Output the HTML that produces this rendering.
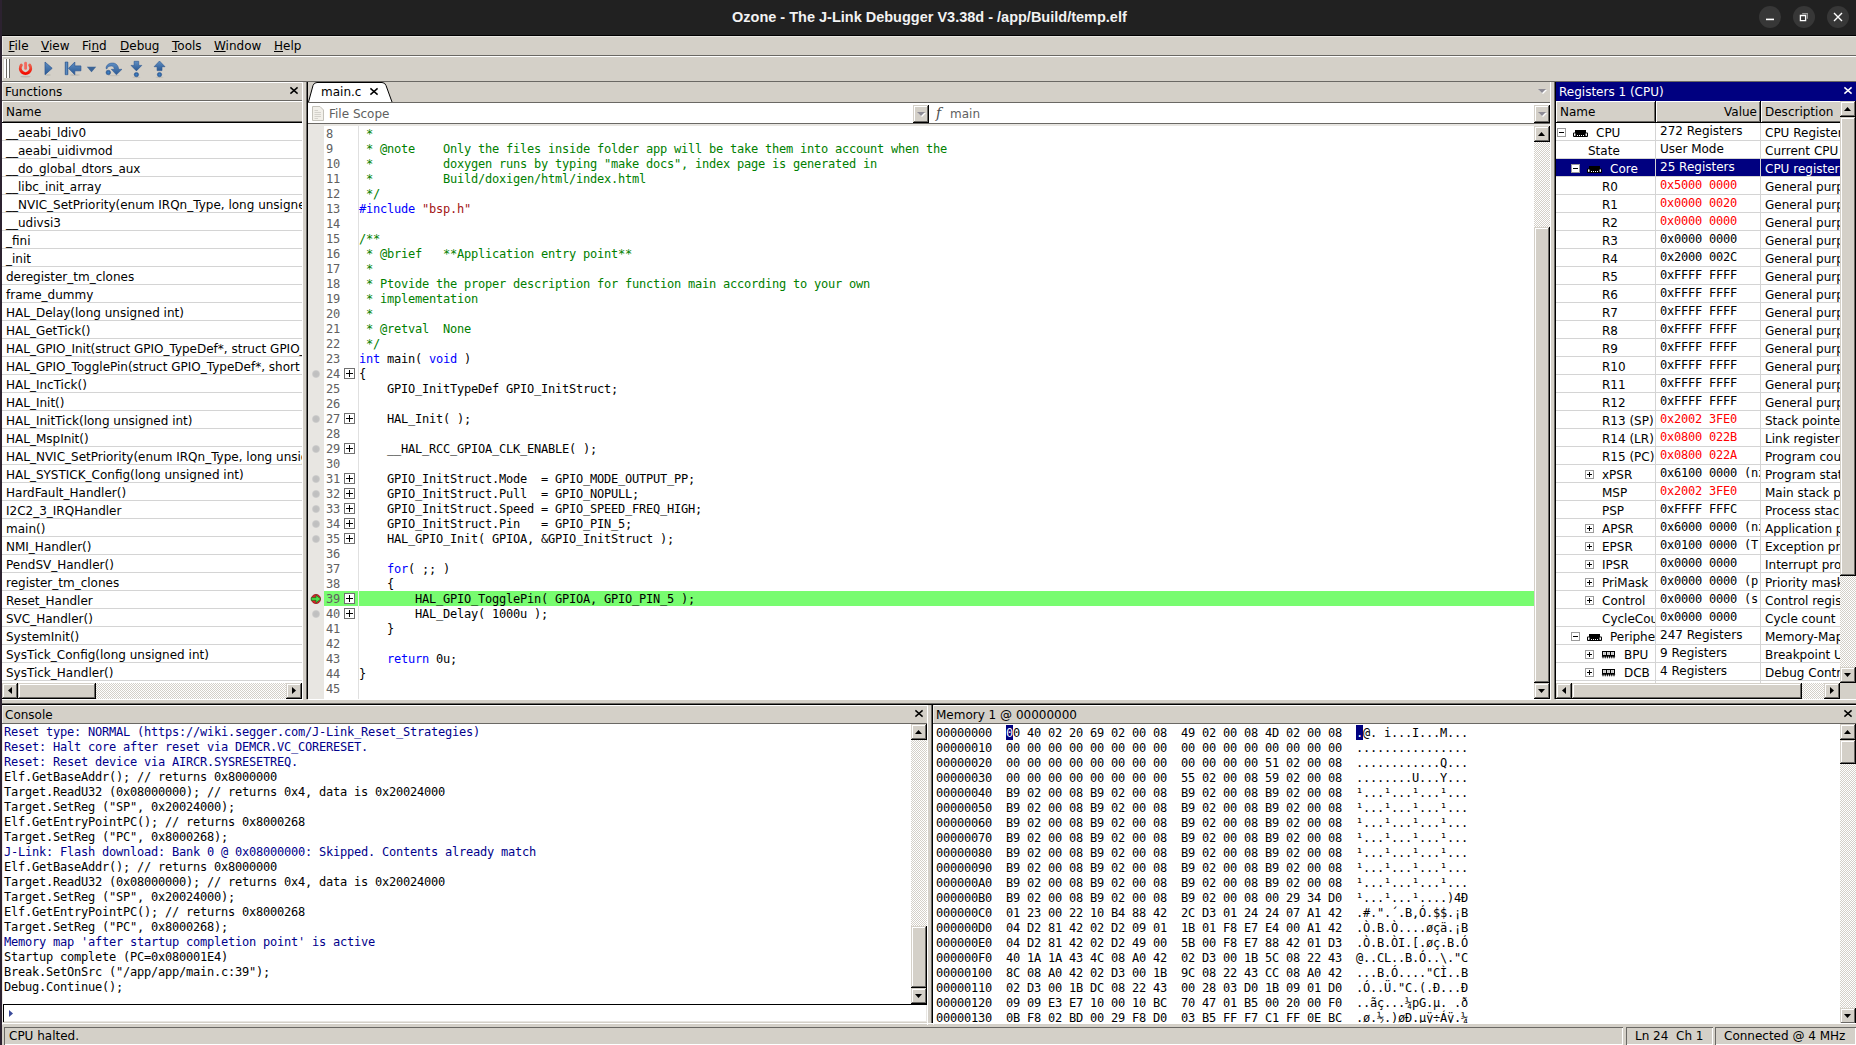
<!DOCTYPE html><html><head><meta charset="utf-8"><title>Ozone</title><style>
*{box-sizing:border-box;margin:0;padding:0}
html,body{width:1856px;height:1045px;overflow:hidden;background:#d4d0c8}
body{position:relative;font-family:"DejaVu Sans","Liberation Sans",sans-serif;font-size:12px;color:#000;}
.a{position:absolute}
.t{position:absolute;white-space:pre;line-height:15px;height:15px;margin-top:1px}
.m{font-family:"DejaVu Sans Mono","Liberation Mono",monospace;font-size:12px;letter-spacing:-0.224px}
.w{background:#fff}
.hl{background:#fff}
.sh{background:#6a6864}
.bk{background:#000}
.btn{position:absolute;background:#d4d0c8;box-shadow:inset -1px -1px 0 #000,inset 1px 1px 0 #d4d0c8,inset -2px -2px 0 #6a6864,inset 2px 2px 0 #fff}
.trk{position:absolute;background-color:#fff;background-image:conic-gradient(#d4d0c8 25%,#fff 0 50%,#d4d0c8 0 75%,#fff 0);background-size:2px 2px}
.hdr{position:absolute;background:#d4d0c8;box-shadow:inset -1px -1px 0 #000,inset 1px 1px 0 #fff,inset -2px -2px 0 #6a6864}
.row{position:absolute;left:0;right:0;height:18px;border-bottom:1px solid #d4d4d4}
.g{color:#008000}.b{color:#0000ff}.r{color:#a31515}.n{color:#606060}
.cb{color:#00008b}
u{text-decoration:underline;text-underline-offset:1px}
svg{position:absolute;overflow:visible}
</style></head><body>
<div class="a " style="left:0px;top:0px;width:1856px;height:35px;background:#212121"></div>
<div class="a bk" style="left:0px;top:35px;width:1856px;height:1px;"></div>
<div class="t " style="left:732px;top:8px;font-family:Liberation Sans,sans-serif;font-weight:bold;font-size:14.5px;color:#f2f2f2;line-height:17px;height:17px">Ozone - The J-Link Debugger V3.38d - /app/Build/temp.elf</div>
<div class="a" style="left:1759px;top:6px;width:22px;height:22px;border-radius:11px;background:#373737"></div>
<div class="a" style="left:1793px;top:6px;width:22px;height:22px;border-radius:11px;background:#373737"></div>
<div class="a" style="left:1827px;top:6px;width:22px;height:22px;border-radius:11px;background:#373737"></div>
<svg style="left:1765px;top:12px" width="10" height="10"><path d="M1 7.4H9" stroke="#fff" stroke-width="1.6"/></svg>
<svg style="left:1799px;top:12px" width="10" height="10"><path d="M3.2 1.6H8.4V6.8" stroke="#9a9a9a" stroke-width="1.1" fill="none"/><path d="M1.4 3.5H6.6V8.6H1.4Z" stroke="#fff" stroke-width="1.3" fill="none"/></svg>
<svg style="left:1834px;top:13px" width="8" height="8"><path d="M0 0L8 8M8 0L0 8" stroke="#fff" stroke-width="1.4"/></svg>
<div class="a " style="left:0px;top:0px;width:2px;height:1045px;background:#2c2230"></div>
<div class="a " style="left:2px;top:36px;width:1854px;height:1px;background:#eae8e3"></div>
<div class="a " style="left:2px;top:36px;width:1px;height:19px;background:#eae8e3"></div>
<div class="a " style="left:2px;top:57px;width:1px;height:24px;background:#eae8e3"></div>
<div class="a sh" style="left:2px;top:55px;width:1854px;height:1px;"></div>
<div class="a w" style="left:2px;top:56px;width:1854px;height:1px;"></div>
<div class="t " style="left:8.5px;top:38px;"><u>F</u>ile</div>
<div class="t " style="left:41px;top:38px;"><u>V</u>iew</div>
<div class="t " style="left:82px;top:38px;">Fi<u>n</u>d</div>
<div class="t " style="left:120px;top:38px;"><u>D</u>ebug</div>
<div class="t " style="left:172px;top:38px;"><u>T</u>ools</div>
<div class="t " style="left:214px;top:38px;"><u>W</u>indow</div>
<div class="t " style="left:274px;top:38px;"><u>H</u>elp</div>
<div class="a sh" style="left:2px;top:81px;width:1854px;height:1px;"></div>
<div class="a w" style="left:4px;top:59px;width:1px;height:19px;"></div>
<div class="a w" style="left:5px;top:59px;width:1px;height:19px;"></div>
<div class="a sh" style="left:6px;top:59px;width:1px;height:19px;"></div>
<div class="a w" style="left:7px;top:59px;width:1px;height:19px;"></div>
<div class="a w" style="left:8px;top:59px;width:1px;height:19px;"></div>
<div class="a sh" style="left:9px;top:59px;width:1px;height:19px;"></div>
<svg style="left:0;top:0" width="180" height="82">
<defs>
<linearGradient id="bl" x1="0" y1="0" x2="0" y2="1"><stop offset="0" stop-color="#5f8fc4"/><stop offset="1" stop-color="#2a5892"/></linearGradient>
<linearGradient id="bh" x1="0" y1="0" x2="1" y2="0"><stop offset="0" stop-color="#2f5f9a"/><stop offset="0.5" stop-color="#5a8cc2"/><stop offset="1" stop-color="#2f5f9a"/></linearGradient>
<linearGradient id="rd" x1="0" y1="0" x2="0" y2="1"><stop offset="0" stop-color="#e8604c"/><stop offset="1" stop-color="#f40c00"/></linearGradient>
<radialGradient id="dt"><stop offset="0" stop-color="#3f86cc"/><stop offset="1" stop-color="#2a5892"/></radialGradient>
</defs>
<ellipse cx="25.5" cy="76.6" rx="5" ry="0.9" fill="#bcb8b0"/>
<ellipse cx="48" cy="75" rx="3" ry="0.7" fill="#bcb8b0"/>
<ellipse cx="75" cy="75" rx="5" ry="0.7" fill="#bcb8b0"/>
<ellipse cx="114" cy="75.6" rx="6" ry="0.7" fill="#c4c0b8"/>
<ellipse cx="136.4" cy="77.2" rx="4" ry="0.7" fill="#c4c0b8"/>
<ellipse cx="159.5" cy="77.2" rx="4" ry="0.7" fill="#c4c0b8"/>
<path d="M21.3 65.2 A5.2 5.2 0 1 0 29.7 65.2" fill="none" stroke="url(#rd)" stroke-width="3" stroke-linecap="round"/>
<path d="M25.6 63.2V68.4" stroke="#f26a60" stroke-width="2.8" stroke-linecap="round"/>
<path d="M45 62L52.2 68.3L45 74.7Z" fill="url(#bl)" stroke="#2a5590" stroke-width="0.7" stroke-linejoin="round"/>
<path d="M65.2 62H67.9V74.7H65.2Z" fill="url(#bh)" stroke="#2a5590" stroke-width="0.6"/>
<path d="M68.5 68.3L74.8 62V65.9H80.9V70.8H74.8V74.7Z" fill="url(#bl)" stroke="#2a5590" stroke-width="0.7" stroke-linejoin="round"/>
<path d="M86.8 66.8H96.2L91.5 72.2Z" fill="#3c6496"/>
<circle cx="108.3" cy="72.5" r="2.3" fill="url(#dt)" stroke="#2a5590" stroke-width="0.5"/>
<path d="M106 68.5C106 64.8 109.3 63 112.5 63C116 63 118.5 65.6 118.6 69.3L122 69.3L116.4 74.8L111.3 69.3L114.4 69.3C114.2 67.2 113 66 111.3 66C109 66 107.4 67.2 106.8 69Z" fill="url(#bl)" stroke="#2a5590" stroke-width="0.5" stroke-linejoin="round"/>
<path d="M134.1 61.3H138.7V65.4H141.8L136.4 70.9L131 65.4H134.1Z" fill="url(#bl)" stroke="#2a5590" stroke-width="0.6" stroke-linejoin="round"/>
<circle cx="136.4" cy="74.6" r="2.2" fill="url(#dt)" stroke="#2a5590" stroke-width="0.5"/>
<path d="M159.5 61L165 66.7H162V70.6H157.1V66.7H154.1Z" fill="url(#bl)" stroke="#2a5590" stroke-width="0.6" stroke-linejoin="round"/>
<circle cx="159.5" cy="74.6" r="2.2" fill="url(#dt)" stroke="#2a5590" stroke-width="0.5"/>
</svg>
<div class="a w" style="left:2px;top:82px;width:301px;height:1px;"></div>
<div class="a w" style="left:302px;top:82px;width:1px;height:617px;"></div>
<div class="a " style="left:2px;top:82px;width:1px;height:617px;background:#eceae6"></div>
<div class="a sh" style="left:2px;top:100px;width:300px;height:1px;"></div>
<div class="t " style="left:5px;top:84px;">Functions</div>
<svg style="left:290px;top:87px" width="8" height="7"><path d="M0.4 0.4L7.6 6.6M7.6 0.4L0.4 6.6" stroke="#000" stroke-width="1.45" fill="none"/></svg>
<div class="a " style="left:2px;top:101px;width:300px;height:22px;background:#d4d0c8;box-shadow:inset 0 -1px 0 #000,inset 1px 1px 0 #fff,inset 0 -2px 0 #6a6864"></div>
<div class="t " style="left:6px;top:104px;">Name</div>
<div class="a w" style="left:2px;top:123px;width:300px;height:576px;"></div>
<div class="a" style="left:2px;top:123px;width:300px;height:560px;overflow:hidden">
<div class="row" style="top:0px"><div class="t" style="left:4px;top:2px">__aeabi_ldiv0</div></div>
<div class="row" style="top:18px"><div class="t" style="left:4px;top:2px">__aeabi_uidivmod</div></div>
<div class="row" style="top:36px"><div class="t" style="left:4px;top:2px">__do_global_dtors_aux</div></div>
<div class="row" style="top:54px"><div class="t" style="left:4px;top:2px">__libc_init_array</div></div>
<div class="row" style="top:72px"><div class="t" style="left:4px;top:2px">__NVIC_SetPriority(enum IRQn_Type, long unsigned int)</div></div>
<div class="row" style="top:90px"><div class="t" style="left:4px;top:2px">__udivsi3</div></div>
<div class="row" style="top:108px"><div class="t" style="left:4px;top:2px">_fini</div></div>
<div class="row" style="top:126px"><div class="t" style="left:4px;top:2px">_init</div></div>
<div class="row" style="top:144px"><div class="t" style="left:4px;top:2px">deregister_tm_clones</div></div>
<div class="row" style="top:162px"><div class="t" style="left:4px;top:2px">frame_dummy</div></div>
<div class="row" style="top:180px"><div class="t" style="left:4px;top:2px">HAL_Delay(long unsigned int)</div></div>
<div class="row" style="top:198px"><div class="t" style="left:4px;top:2px">HAL_GetTick()</div></div>
<div class="row" style="top:216px"><div class="t" style="left:4px;top:2px">HAL_GPIO_Init(struct GPIO_TypeDef*, struct GPIO_InitTypeDef*)</div></div>
<div class="row" style="top:234px"><div class="t" style="left:4px;top:2px">HAL_GPIO_TogglePin(struct GPIO_TypeDef*, short unsigned int)</div></div>
<div class="row" style="top:252px"><div class="t" style="left:4px;top:2px">HAL_IncTick()</div></div>
<div class="row" style="top:270px"><div class="t" style="left:4px;top:2px">HAL_Init()</div></div>
<div class="row" style="top:288px"><div class="t" style="left:4px;top:2px">HAL_InitTick(long unsigned int)</div></div>
<div class="row" style="top:306px"><div class="t" style="left:4px;top:2px">HAL_MspInit()</div></div>
<div class="row" style="top:324px"><div class="t" style="left:4px;top:2px">HAL_NVIC_SetPriority(enum IRQn_Type, long unsigned int, long unsigned int)</div></div>
<div class="row" style="top:342px"><div class="t" style="left:4px;top:2px">HAL_SYSTICK_Config(long unsigned int)</div></div>
<div class="row" style="top:360px"><div class="t" style="left:4px;top:2px">HardFault_Handler()</div></div>
<div class="row" style="top:378px"><div class="t" style="left:4px;top:2px">I2C2_3_IRQHandler</div></div>
<div class="row" style="top:396px"><div class="t" style="left:4px;top:2px">main()</div></div>
<div class="row" style="top:414px"><div class="t" style="left:4px;top:2px">NMI_Handler()</div></div>
<div class="row" style="top:432px"><div class="t" style="left:4px;top:2px">PendSV_Handler()</div></div>
<div class="row" style="top:450px"><div class="t" style="left:4px;top:2px">register_tm_clones</div></div>
<div class="row" style="top:468px"><div class="t" style="left:4px;top:2px">Reset_Handler</div></div>
<div class="row" style="top:486px"><div class="t" style="left:4px;top:2px">SVC_Handler()</div></div>
<div class="row" style="top:504px"><div class="t" style="left:4px;top:2px">SystemInit()</div></div>
<div class="row" style="top:522px"><div class="t" style="left:4px;top:2px">SysTick_Config(long unsigned int)</div></div>
<div class="row" style="top:540px"><div class="t" style="left:4px;top:2px">SysTick_Handler()</div></div>
</div>
<div class="trk" style="left:2px;top:683px;width:300px;height:16px"></div>
<div class="btn" style="left:2px;top:683px;width:16px;height:16px"></div>
<svg style="left:8px;top:687px" width="8" height="8"><polygon points="4,0 4,7 0,3.5" fill="#000"/></svg>
<div class="btn" style="left:286px;top:683px;width:16px;height:16px"></div>
<svg style="left:292px;top:687px" width="8" height="8"><polygon points="0,0 0,7 4,3.5" fill="#000"/></svg>
<div class="btn" style="left:18px;top:683px;width:78px;height:16px"></div>
<div class="a sh" style="left:306px;top:82px;width:1px;height:617px;"></div>
<div class="a bk" style="left:307px;top:82px;width:1px;height:617px;"></div>
<div class="a " style="left:308px;top:82px;width:1242px;height:21px;background:#d4d0c8"></div>
<div class="a sh" style="left:308px;top:102px;width:1242px;height:1px;"></div>
<div class="a w" style="left:308px;top:103px;width:1242px;height:2px;"></div>
<svg style="left:308px;top:82px" width="90" height="22"><path d="M0.5 20 L5 3.5 Q6 0.5 9 0.5 L74 0.5 Q77 0.5 78 3.5 L84 20Z" fill="#fff"/><path d="M0.5 20 L5 3.5 Q6 0.5 9 0.5 L74 0.5 Q77 0.5 78 3.5 L84 20" fill="none" stroke="#000" stroke-width="1"/></svg>
<div class="t " style="left:321px;top:84px;">main.c</div>
<svg style="left:370px;top:88px" width="8" height="7"><path d="M0.4 0.4L7.6 6.6M7.6 0.4L0.4 6.6" stroke="#000" stroke-width="1.45" fill="none"/></svg>
<svg style="left:1538px;top:89px" width="10" height="6"><polygon points="1,1 9,1 5,5" fill="#fff"/><polygon points="0,0 8,0 4,4" fill="#8d8b95"/></svg>
<div class="a w" style="left:308px;top:105px;width:1242px;height:18px;"></div>
<div class="a sh" style="left:308px;top:123px;width:1242px;height:1px;"></div>
<div class="a " style="left:308px;top:124px;width:1242px;height:2px;background:#e8e6e2"></div>
<div class="t " style="left:329px;top:106px;color:#606060">File Scope</div>
<div class="a btn" style="left:913px;top:105px;width:16px;height:18px;"></div>
<svg style="left:917px;top:112px" width="10" height="6"><polygon points="1,1 9,1 5,5" fill="#fff"/><polygon points="0,0 8,0 4,4" fill="#8d8b95"/></svg>
<div class="t " style="left:936px;top:105px;color:#505050;font-style:italic;font-family:DejaVu Serif,serif;font-size:14px">f</div>
<div class="t " style="left:950px;top:106px;color:#606060">main</div>
<div class="a btn" style="left:1534px;top:105px;width:16px;height:18px;"></div>
<svg style="left:1538px;top:112px" width="10" height="6"><polygon points="1,1 9,1 5,5" fill="#fff"/><polygon points="0,0 8,0 4,4" fill="#8d8b95"/></svg>
<svg style="left:312px;top:106px" width="12" height="15"><path d="M0.5 0.5H8L11.5 4V14.5H0.5Z" fill="#f2f0ea" stroke="#c4c2ba"/><path d="M2.5 4.5H6M2.5 6.5H9M2.5 8.5H9M2.5 10.5H9M2.5 12.5H6" stroke="#d4d2cc"/></svg>
<div class="a w" style="left:308px;top:126px;width:1226px;height:573px;"></div>
<div class="a " style="left:308px;top:126px;width:16px;height:573px;background:#e8e6e2"></div>
<div class="a " style="left:358px;top:126px;width:1px;height:573px;background:#e0e0e0"></div>
<div class="a" style="left:308px;top:126px;width:1226px;height:573px;overflow:hidden">
<div class="t m n" style="left:18px;top:0px">8</div>
<div class="t m" style="left:51px;top:0px"><span class="g"> *</span></div>
<div class="t m n" style="left:18px;top:15px">9</div>
<div class="t m" style="left:51px;top:15px"><span class="g"> * @note    Only the files inside folder app will be take them into account when the</span></div>
<div class="t m n" style="left:18px;top:30px">10</div>
<div class="t m" style="left:51px;top:30px"><span class="g"> *          doxygen runs by typing &quot;make docs&quot;, index page is generated in</span></div>
<div class="t m n" style="left:18px;top:45px">11</div>
<div class="t m" style="left:51px;top:45px"><span class="g"> *          Build/doxigen/html/index.html</span></div>
<div class="t m n" style="left:18px;top:60px">12</div>
<div class="t m" style="left:51px;top:60px"><span class="g"> */</span></div>
<div class="t m n" style="left:18px;top:75px">13</div>
<div class="t m" style="left:51px;top:75px"><span class="b">#include</span> <span class="r">&quot;bsp.h&quot;</span></div>
<div class="t m n" style="left:18px;top:90px">14</div>
<div class="t m n" style="left:18px;top:105px">15</div>
<div class="t m" style="left:51px;top:105px"><span class="g">/**</span></div>
<div class="t m n" style="left:18px;top:120px">16</div>
<div class="t m" style="left:51px;top:120px"><span class="g"> * @brief   **Application entry point**</span></div>
<div class="t m n" style="left:18px;top:135px">17</div>
<div class="t m" style="left:51px;top:135px"><span class="g"> *</span></div>
<div class="t m n" style="left:18px;top:150px">18</div>
<div class="t m" style="left:51px;top:150px"><span class="g"> * Ptovide the proper description for function main according to your own</span></div>
<div class="t m n" style="left:18px;top:165px">19</div>
<div class="t m" style="left:51px;top:165px"><span class="g"> * implementation</span></div>
<div class="t m n" style="left:18px;top:180px">20</div>
<div class="t m" style="left:51px;top:180px"><span class="g"> *</span></div>
<div class="t m n" style="left:18px;top:195px">21</div>
<div class="t m" style="left:51px;top:195px"><span class="g"> * @retval  None</span></div>
<div class="t m n" style="left:18px;top:210px">22</div>
<div class="t m" style="left:51px;top:210px"><span class="g"> */</span></div>
<div class="t m n" style="left:18px;top:225px">23</div>
<div class="t m" style="left:51px;top:225px"><span class="b">int</span> main( <span class="b">void</span> )</div>
<div class="t m n" style="left:18px;top:240px">24</div>
<div class="a" style="left:36px;top:242px;width:11px;height:11px;border:1px solid #707070;background:#fff"></div>
<div class="a" style="left:38px;top:247px;width:7px;height:1px;background:#000"></div>
<div class="a" style="left:41px;top:244px;width:1px;height:7px;background:#000"></div>
<div class="a" style="left:4px;top:244px;width:8px;height:8px;border-radius:4px;background:radial-gradient(circle at 50% 50%,#bebebe 0,#c2c2c2 50%,rgba(200,200,200,0) 88%)"></div>
<div class="t m" style="left:51px;top:240px">{</div>
<div class="t m n" style="left:18px;top:255px">25</div>
<div class="t m" style="left:51px;top:255px">    GPIO_InitTypeDef GPIO_InitStruct;</div>
<div class="t m n" style="left:18px;top:270px">26</div>
<div class="t m n" style="left:18px;top:285px">27</div>
<div class="a" style="left:36px;top:287px;width:11px;height:11px;border:1px solid #707070;background:#fff"></div>
<div class="a" style="left:38px;top:292px;width:7px;height:1px;background:#000"></div>
<div class="a" style="left:41px;top:289px;width:1px;height:7px;background:#000"></div>
<div class="a" style="left:4px;top:289px;width:8px;height:8px;border-radius:4px;background:radial-gradient(circle at 50% 50%,#bebebe 0,#c2c2c2 50%,rgba(200,200,200,0) 88%)"></div>
<div class="t m" style="left:51px;top:285px">    HAL_Init( );</div>
<div class="t m n" style="left:18px;top:300px">28</div>
<div class="t m n" style="left:18px;top:315px">29</div>
<div class="a" style="left:36px;top:317px;width:11px;height:11px;border:1px solid #707070;background:#fff"></div>
<div class="a" style="left:38px;top:322px;width:7px;height:1px;background:#000"></div>
<div class="a" style="left:41px;top:319px;width:1px;height:7px;background:#000"></div>
<div class="a" style="left:4px;top:319px;width:8px;height:8px;border-radius:4px;background:radial-gradient(circle at 50% 50%,#bebebe 0,#c2c2c2 50%,rgba(200,200,200,0) 88%)"></div>
<div class="t m" style="left:51px;top:315px">    __HAL_RCC_GPIOA_CLK_ENABLE( );</div>
<div class="t m n" style="left:18px;top:330px">30</div>
<div class="t m n" style="left:18px;top:345px">31</div>
<div class="a" style="left:36px;top:347px;width:11px;height:11px;border:1px solid #707070;background:#fff"></div>
<div class="a" style="left:38px;top:352px;width:7px;height:1px;background:#000"></div>
<div class="a" style="left:41px;top:349px;width:1px;height:7px;background:#000"></div>
<div class="a" style="left:4px;top:349px;width:8px;height:8px;border-radius:4px;background:radial-gradient(circle at 50% 50%,#bebebe 0,#c2c2c2 50%,rgba(200,200,200,0) 88%)"></div>
<div class="t m" style="left:51px;top:345px">    GPIO_InitStruct.Mode  = GPIO_MODE_OUTPUT_PP;</div>
<div class="t m n" style="left:18px;top:360px">32</div>
<div class="a" style="left:36px;top:362px;width:11px;height:11px;border:1px solid #707070;background:#fff"></div>
<div class="a" style="left:38px;top:367px;width:7px;height:1px;background:#000"></div>
<div class="a" style="left:41px;top:364px;width:1px;height:7px;background:#000"></div>
<div class="a" style="left:4px;top:364px;width:8px;height:8px;border-radius:4px;background:radial-gradient(circle at 50% 50%,#bebebe 0,#c2c2c2 50%,rgba(200,200,200,0) 88%)"></div>
<div class="t m" style="left:51px;top:360px">    GPIO_InitStruct.Pull  = GPIO_NOPULL;</div>
<div class="t m n" style="left:18px;top:375px">33</div>
<div class="a" style="left:36px;top:377px;width:11px;height:11px;border:1px solid #707070;background:#fff"></div>
<div class="a" style="left:38px;top:382px;width:7px;height:1px;background:#000"></div>
<div class="a" style="left:41px;top:379px;width:1px;height:7px;background:#000"></div>
<div class="a" style="left:4px;top:379px;width:8px;height:8px;border-radius:4px;background:radial-gradient(circle at 50% 50%,#bebebe 0,#c2c2c2 50%,rgba(200,200,200,0) 88%)"></div>
<div class="t m" style="left:51px;top:375px">    GPIO_InitStruct.Speed = GPIO_SPEED_FREQ_HIGH;</div>
<div class="t m n" style="left:18px;top:390px">34</div>
<div class="a" style="left:36px;top:392px;width:11px;height:11px;border:1px solid #707070;background:#fff"></div>
<div class="a" style="left:38px;top:397px;width:7px;height:1px;background:#000"></div>
<div class="a" style="left:41px;top:394px;width:1px;height:7px;background:#000"></div>
<div class="a" style="left:4px;top:394px;width:8px;height:8px;border-radius:4px;background:radial-gradient(circle at 50% 50%,#bebebe 0,#c2c2c2 50%,rgba(200,200,200,0) 88%)"></div>
<div class="t m" style="left:51px;top:390px">    GPIO_InitStruct.Pin   = GPIO_PIN_5;</div>
<div class="t m n" style="left:18px;top:405px">35</div>
<div class="a" style="left:36px;top:407px;width:11px;height:11px;border:1px solid #707070;background:#fff"></div>
<div class="a" style="left:38px;top:412px;width:7px;height:1px;background:#000"></div>
<div class="a" style="left:41px;top:409px;width:1px;height:7px;background:#000"></div>
<div class="a" style="left:4px;top:409px;width:8px;height:8px;border-radius:4px;background:radial-gradient(circle at 50% 50%,#bebebe 0,#c2c2c2 50%,rgba(200,200,200,0) 88%)"></div>
<div class="t m" style="left:51px;top:405px">    HAL_GPIO_Init( GPIOA, &amp;GPIO_InitStruct );</div>
<div class="t m n" style="left:18px;top:420px">36</div>
<div class="t m n" style="left:18px;top:435px">37</div>
<div class="t m" style="left:51px;top:435px">    <span class="b">for</span>( ;; )</div>
<div class="t m n" style="left:18px;top:450px">38</div>
<div class="t m" style="left:51px;top:450px">    {</div>
<div class="a" style="left:16px;top:465px;width:1210px;height:15px;background:#78fc70"></div>
<div class="a" style="left:50px;top:465px;width:1px;height:15px;background:#e8f0e4"></div>
<div class="t m n" style="left:18px;top:465px">39</div>
<div class="a" style="left:36px;top:467px;width:11px;height:11px;border:1px solid #707070;background:#fff"></div>
<div class="a" style="left:38px;top:472px;width:7px;height:1px;background:#000"></div>
<div class="a" style="left:41px;top:469px;width:1px;height:7px;background:#000"></div>
<div class="t m" style="left:51px;top:465px">        HAL_GPIO_TogglePin( GPIOA, GPIO_PIN_5 );</div>
<div class="t m n" style="left:18px;top:480px">40</div>
<div class="a" style="left:36px;top:482px;width:11px;height:11px;border:1px solid #707070;background:#fff"></div>
<div class="a" style="left:38px;top:487px;width:7px;height:1px;background:#000"></div>
<div class="a" style="left:41px;top:484px;width:1px;height:7px;background:#000"></div>
<div class="a" style="left:4px;top:484px;width:8px;height:8px;border-radius:4px;background:radial-gradient(circle at 50% 50%,#bebebe 0,#c2c2c2 50%,rgba(200,200,200,0) 88%)"></div>
<div class="t m" style="left:51px;top:480px">        HAL_Delay( 1000u );</div>
<div class="t m n" style="left:18px;top:495px">41</div>
<div class="t m" style="left:51px;top:495px">    }</div>
<div class="t m n" style="left:18px;top:510px">42</div>
<div class="t m n" style="left:18px;top:525px">43</div>
<div class="t m" style="left:51px;top:525px">    <span class="b">return</span> 0u;</div>
<div class="t m n" style="left:18px;top:540px">44</div>
<div class="t m" style="left:51px;top:540px">}</div>
<div class="t m n" style="left:18px;top:555px">45</div>
<svg style="left:2px;top:467px" width="12" height="12"><circle cx="6" cy="6" r="4.6" fill="#e0202a" stroke="#901418" stroke-width="0.8"/><path d="M1.2 4.7H6V2.2L10.8 6L6 9.8V7.3H1.2Z" fill="#4ce04c" stroke="#1c7a1c" stroke-width="0.8" stroke-linejoin="round"/></svg>
</div>
<div class="trk" style="left:1534px;top:126px;width:16px;height:573px"></div>
<div class="btn" style="left:1534px;top:126px;width:16px;height:16px"></div>
<svg style="left:1538px;top:132px" width="8" height="8"><polygon points="0,4 7,4 3.5,0" fill="#000"/></svg>
<div class="btn" style="left:1534px;top:683px;width:16px;height:16px"></div>
<svg style="left:1538px;top:689px" width="8" height="8"><polygon points="0,0 7,0 3.5,4" fill="#000"/></svg>
<div class="btn" style="left:1534px;top:227px;width:16px;height:456px"></div>
<div class="a w" style="left:1550px;top:82px;width:1px;height:617px;"></div>
<div class="a sh" style="left:1554px;top:82px;width:1px;height:617px;"></div>
<div class="a bk" style="left:1555px;top:82px;width:1px;height:617px;"></div>
<div class="a w" style="left:308px;top:699px;width:1243px;height:1px;"></div>
<div class="a w" style="left:2px;top:699px;width:301px;height:1px;"></div>
<div class="a w" style="left:1556px;top:699px;width:300px;height:1px;"></div>
<div class="a " style="left:1556px;top:82px;width:300px;height:19px;background:#000080"></div>
<div class="t " style="left:1559px;top:84px;color:#fff">Registers 1 (CPU)</div>
<svg style="left:1844px;top:87px" width="8" height="7"><path d="M0.4 0.4L7.6 6.6M7.6 0.4L0.4 6.6" stroke="#fff" stroke-width="1.45" fill="none"/></svg>
<div class="a hdr" style="left:1556px;top:101px;width:100px;height:22px;"></div>
<div class="t " style="left:1560px;top:104px;">Name</div>
<div class="a hdr" style="left:1656px;top:101px;width:105px;height:22px;"></div>
<div class="t " style="left:1657px;top:104px;width:100px;text-align:right">Value</div>
<div class="a " style="left:1761px;top:101px;width:79px;height:22px;background:#d4d0c8;box-shadow:inset 0 -1px 0 #000,inset 1px 1px 0 #fff,inset 0 -2px 0 #6a6864"></div>
<div class="t " style="left:1765px;top:104px;">Description</div>
<div class="a w" style="left:1556px;top:123px;width:284px;height:560px;"></div>
<div class="a" style="left:1556px;top:123px;width:284px;height:560px;overflow:hidden">
<div class="a" style="left:99px;top:0;width:1px;height:561px;background:#d4d4d4"></div>
<div class="a" style="left:204px;top:0;width:1px;height:561px;background:#d4d4d4"></div>
<div class="row" style="top:0px;">
<div class="a" style="left:1px;top:5px;width:9px;height:9px;border:1px solid #9a9a9a;background:#fff"></div>
<div class="a" style="left:3px;top:9px;width:5px;height:1px;background:#000"></div>
<svg style="left:17px;top:7px" width="16" height="8"><path d="M2 0H13V2.4H14Q15 2.4 15 3.4V6Q15 7 14 7H1Q0 7 0 6V3.4Q0 2.4 1 2.4H2Z" fill="#000"/><rect x="1" y="3.2" width="1.5" height="2.8" rx="0.75" fill="#fff"/><rect x="12.5" y="3.2" width="1.5" height="2.8" rx="0.75" fill="#fff"/><path d="M4 5.5H5M6 5.5H7M8 5.5H9M10 5.5H11" stroke="#fff" stroke-width="1"/></svg>
<div class="a" style="left:0;top:0;width:99px;height:17px;overflow:hidden"><div class="t" style="left:40px;top:2px;">CPU</div></div>
<div class="a" style="left:100px;top:0;width:104px;height:17px;overflow:hidden"><div class="t" style="left:4px;top:0px;">272 Registers</div></div>
<div class="a" style="left:205px;top:0;width:79px;height:17px;overflow:hidden"><div class="t" style="left:4px;top:2px;">CPU Registers</div></div>
</div>
<div class="row" style="top:18px;">
<div class="a" style="left:0;top:0;width:99px;height:17px;overflow:hidden"><div class="t" style="left:32px;top:2px;">State</div></div>
<div class="a" style="left:100px;top:0;width:104px;height:17px;overflow:hidden"><div class="t" style="left:4px;top:0px;">User Mode</div></div>
<div class="a" style="left:205px;top:0;width:79px;height:17px;overflow:hidden"><div class="t" style="left:4px;top:2px;">Current CPU mode</div></div>
</div>
<div class="row" style="top:36px;background:#000080;">
<div class="a" style="left:99px;top:0;width:1px;height:18px;background:#d4d4d4"></div><div class="a" style="left:204px;top:0;width:1px;height:18px;background:#d4d4d4"></div>
<div class="a" style="left:15px;top:5px;width:9px;height:9px;border:1px solid #9a9a9a;background:#fff"></div>
<div class="a" style="left:17px;top:9px;width:5px;height:1px;background:#000"></div>
<svg style="left:31px;top:7px" width="16" height="8"><path d="M2 0H13V2.4H14Q15 2.4 15 3.4V6Q15 7 14 7H1Q0 7 0 6V3.4Q0 2.4 1 2.4H2Z" fill="#000"/><rect x="1" y="3.2" width="1.5" height="2.8" rx="0.75" fill="#fff"/><rect x="12.5" y="3.2" width="1.5" height="2.8" rx="0.75" fill="#fff"/><path d="M4 5.5H5M6 5.5H7M8 5.5H9M10 5.5H11" stroke="#fff" stroke-width="1"/></svg>
<div class="a" style="left:0;top:0;width:99px;height:17px;overflow:hidden"><div class="t" style="left:54px;top:2px;color:#fff;">Core</div></div>
<div class="a" style="left:100px;top:0;width:104px;height:17px;overflow:hidden"><div class="t" style="left:4px;top:0px;color:#fff;">25 Registers</div></div>
<div class="a" style="left:205px;top:0;width:79px;height:17px;overflow:hidden"><div class="t" style="left:4px;top:2px;color:#fff;">CPU registers</div></div>
</div>
<div class="row" style="top:54px;">
<div class="a" style="left:0;top:0;width:99px;height:17px;overflow:hidden"><div class="t" style="left:46px;top:2px;">R0</div></div>
<div class="a" style="left:100px;top:0;width:104px;height:17px;overflow:hidden"><div class="t m" style="left:4px;top:0px;color:#ff0000;">0x5000 0000</div></div>
<div class="a" style="left:205px;top:0;width:79px;height:17px;overflow:hidden"><div class="t" style="left:4px;top:2px;">General purpose</div></div>
</div>
<div class="row" style="top:72px;">
<div class="a" style="left:0;top:0;width:99px;height:17px;overflow:hidden"><div class="t" style="left:46px;top:2px;">R1</div></div>
<div class="a" style="left:100px;top:0;width:104px;height:17px;overflow:hidden"><div class="t m" style="left:4px;top:0px;color:#ff0000;">0x0000 0020</div></div>
<div class="a" style="left:205px;top:0;width:79px;height:17px;overflow:hidden"><div class="t" style="left:4px;top:2px;">General purpose</div></div>
</div>
<div class="row" style="top:90px;">
<div class="a" style="left:0;top:0;width:99px;height:17px;overflow:hidden"><div class="t" style="left:46px;top:2px;">R2</div></div>
<div class="a" style="left:100px;top:0;width:104px;height:17px;overflow:hidden"><div class="t m" style="left:4px;top:0px;color:#ff0000;">0x0000 0000</div></div>
<div class="a" style="left:205px;top:0;width:79px;height:17px;overflow:hidden"><div class="t" style="left:4px;top:2px;">General purpose</div></div>
</div>
<div class="row" style="top:108px;">
<div class="a" style="left:0;top:0;width:99px;height:17px;overflow:hidden"><div class="t" style="left:46px;top:2px;">R3</div></div>
<div class="a" style="left:100px;top:0;width:104px;height:17px;overflow:hidden"><div class="t m" style="left:4px;top:0px;">0x0000 0000</div></div>
<div class="a" style="left:205px;top:0;width:79px;height:17px;overflow:hidden"><div class="t" style="left:4px;top:2px;">General purpose</div></div>
</div>
<div class="row" style="top:126px;">
<div class="a" style="left:0;top:0;width:99px;height:17px;overflow:hidden"><div class="t" style="left:46px;top:2px;">R4</div></div>
<div class="a" style="left:100px;top:0;width:104px;height:17px;overflow:hidden"><div class="t m" style="left:4px;top:0px;">0x2000 002C</div></div>
<div class="a" style="left:205px;top:0;width:79px;height:17px;overflow:hidden"><div class="t" style="left:4px;top:2px;">General purpose</div></div>
</div>
<div class="row" style="top:144px;">
<div class="a" style="left:0;top:0;width:99px;height:17px;overflow:hidden"><div class="t" style="left:46px;top:2px;">R5</div></div>
<div class="a" style="left:100px;top:0;width:104px;height:17px;overflow:hidden"><div class="t m" style="left:4px;top:0px;">0xFFFF FFFF</div></div>
<div class="a" style="left:205px;top:0;width:79px;height:17px;overflow:hidden"><div class="t" style="left:4px;top:2px;">General purpose</div></div>
</div>
<div class="row" style="top:162px;">
<div class="a" style="left:0;top:0;width:99px;height:17px;overflow:hidden"><div class="t" style="left:46px;top:2px;">R6</div></div>
<div class="a" style="left:100px;top:0;width:104px;height:17px;overflow:hidden"><div class="t m" style="left:4px;top:0px;">0xFFFF FFFF</div></div>
<div class="a" style="left:205px;top:0;width:79px;height:17px;overflow:hidden"><div class="t" style="left:4px;top:2px;">General purpose</div></div>
</div>
<div class="row" style="top:180px;">
<div class="a" style="left:0;top:0;width:99px;height:17px;overflow:hidden"><div class="t" style="left:46px;top:2px;">R7</div></div>
<div class="a" style="left:100px;top:0;width:104px;height:17px;overflow:hidden"><div class="t m" style="left:4px;top:0px;">0xFFFF FFFF</div></div>
<div class="a" style="left:205px;top:0;width:79px;height:17px;overflow:hidden"><div class="t" style="left:4px;top:2px;">General purpose</div></div>
</div>
<div class="row" style="top:198px;">
<div class="a" style="left:0;top:0;width:99px;height:17px;overflow:hidden"><div class="t" style="left:46px;top:2px;">R8</div></div>
<div class="a" style="left:100px;top:0;width:104px;height:17px;overflow:hidden"><div class="t m" style="left:4px;top:0px;">0xFFFF FFFF</div></div>
<div class="a" style="left:205px;top:0;width:79px;height:17px;overflow:hidden"><div class="t" style="left:4px;top:2px;">General purpose</div></div>
</div>
<div class="row" style="top:216px;">
<div class="a" style="left:0;top:0;width:99px;height:17px;overflow:hidden"><div class="t" style="left:46px;top:2px;">R9</div></div>
<div class="a" style="left:100px;top:0;width:104px;height:17px;overflow:hidden"><div class="t m" style="left:4px;top:0px;">0xFFFF FFFF</div></div>
<div class="a" style="left:205px;top:0;width:79px;height:17px;overflow:hidden"><div class="t" style="left:4px;top:2px;">General purpose</div></div>
</div>
<div class="row" style="top:234px;">
<div class="a" style="left:0;top:0;width:99px;height:17px;overflow:hidden"><div class="t" style="left:46px;top:2px;">R10</div></div>
<div class="a" style="left:100px;top:0;width:104px;height:17px;overflow:hidden"><div class="t m" style="left:4px;top:0px;">0xFFFF FFFF</div></div>
<div class="a" style="left:205px;top:0;width:79px;height:17px;overflow:hidden"><div class="t" style="left:4px;top:2px;">General purpose</div></div>
</div>
<div class="row" style="top:252px;">
<div class="a" style="left:0;top:0;width:99px;height:17px;overflow:hidden"><div class="t" style="left:46px;top:2px;">R11</div></div>
<div class="a" style="left:100px;top:0;width:104px;height:17px;overflow:hidden"><div class="t m" style="left:4px;top:0px;">0xFFFF FFFF</div></div>
<div class="a" style="left:205px;top:0;width:79px;height:17px;overflow:hidden"><div class="t" style="left:4px;top:2px;">General purpose</div></div>
</div>
<div class="row" style="top:270px;">
<div class="a" style="left:0;top:0;width:99px;height:17px;overflow:hidden"><div class="t" style="left:46px;top:2px;">R12</div></div>
<div class="a" style="left:100px;top:0;width:104px;height:17px;overflow:hidden"><div class="t m" style="left:4px;top:0px;">0xFFFF FFFF</div></div>
<div class="a" style="left:205px;top:0;width:79px;height:17px;overflow:hidden"><div class="t" style="left:4px;top:2px;">General purpose</div></div>
</div>
<div class="row" style="top:288px;">
<div class="a" style="left:0;top:0;width:99px;height:17px;overflow:hidden"><div class="t" style="left:46px;top:2px;">R13 (SP)</div></div>
<div class="a" style="left:100px;top:0;width:104px;height:17px;overflow:hidden"><div class="t m" style="left:4px;top:0px;color:#ff0000;">0x2002 3FE0</div></div>
<div class="a" style="left:205px;top:0;width:79px;height:17px;overflow:hidden"><div class="t" style="left:4px;top:2px;">Stack pointer</div></div>
</div>
<div class="row" style="top:306px;">
<div class="a" style="left:0;top:0;width:99px;height:17px;overflow:hidden"><div class="t" style="left:46px;top:2px;">R14 (LR)</div></div>
<div class="a" style="left:100px;top:0;width:104px;height:17px;overflow:hidden"><div class="t m" style="left:4px;top:0px;color:#ff0000;">0x0800 022B</div></div>
<div class="a" style="left:205px;top:0;width:79px;height:17px;overflow:hidden"><div class="t" style="left:4px;top:2px;">Link register</div></div>
</div>
<div class="row" style="top:324px;">
<div class="a" style="left:0;top:0;width:99px;height:17px;overflow:hidden"><div class="t" style="left:46px;top:2px;">R15 (PC)</div></div>
<div class="a" style="left:100px;top:0;width:104px;height:17px;overflow:hidden"><div class="t m" style="left:4px;top:0px;color:#ff0000;">0x0800 022A</div></div>
<div class="a" style="left:205px;top:0;width:79px;height:17px;overflow:hidden"><div class="t" style="left:4px;top:2px;">Program counter</div></div>
</div>
<div class="row" style="top:342px;">
<div class="a" style="left:29px;top:5px;width:9px;height:9px;border:1px solid #9a9a9a;background:#fff"></div>
<div class="a" style="left:31px;top:9px;width:5px;height:1px;background:#000"></div>
<div class="a" style="left:33px;top:7px;width:1px;height:5px;background:#000"></div>
<div class="a" style="left:0;top:0;width:99px;height:17px;overflow:hidden"><div class="t" style="left:46px;top:2px;">xPSR</div></div>
<div class="a" style="left:100px;top:0;width:104px;height:17px;overflow:hidden"><div class="t m" style="left:4px;top:0px;">0x6100 0000 (nzCvq)</div></div>
<div class="a" style="left:205px;top:0;width:79px;height:17px;overflow:hidden"><div class="t" style="left:4px;top:2px;">Program status</div></div>
</div>
<div class="row" style="top:360px;">
<div class="a" style="left:0;top:0;width:99px;height:17px;overflow:hidden"><div class="t" style="left:46px;top:2px;">MSP</div></div>
<div class="a" style="left:100px;top:0;width:104px;height:17px;overflow:hidden"><div class="t m" style="left:4px;top:0px;color:#ff0000;">0x2002 3FE0</div></div>
<div class="a" style="left:205px;top:0;width:79px;height:17px;overflow:hidden"><div class="t" style="left:4px;top:2px;">Main stack pointer</div></div>
</div>
<div class="row" style="top:378px;">
<div class="a" style="left:0;top:0;width:99px;height:17px;overflow:hidden"><div class="t" style="left:46px;top:2px;">PSP</div></div>
<div class="a" style="left:100px;top:0;width:104px;height:17px;overflow:hidden"><div class="t m" style="left:4px;top:0px;">0xFFFF FFFC</div></div>
<div class="a" style="left:205px;top:0;width:79px;height:17px;overflow:hidden"><div class="t" style="left:4px;top:2px;">Process stack pointer</div></div>
</div>
<div class="row" style="top:396px;">
<div class="a" style="left:29px;top:5px;width:9px;height:9px;border:1px solid #9a9a9a;background:#fff"></div>
<div class="a" style="left:31px;top:9px;width:5px;height:1px;background:#000"></div>
<div class="a" style="left:33px;top:7px;width:1px;height:5px;background:#000"></div>
<div class="a" style="left:0;top:0;width:99px;height:17px;overflow:hidden"><div class="t" style="left:46px;top:2px;">APSR</div></div>
<div class="a" style="left:100px;top:0;width:104px;height:17px;overflow:hidden"><div class="t m" style="left:4px;top:0px;">0x6000 0000 (nzCvq)</div></div>
<div class="a" style="left:205px;top:0;width:79px;height:17px;overflow:hidden"><div class="t" style="left:4px;top:2px;">Application program</div></div>
</div>
<div class="row" style="top:414px;">
<div class="a" style="left:29px;top:5px;width:9px;height:9px;border:1px solid #9a9a9a;background:#fff"></div>
<div class="a" style="left:31px;top:9px;width:5px;height:1px;background:#000"></div>
<div class="a" style="left:33px;top:7px;width:1px;height:5px;background:#000"></div>
<div class="a" style="left:0;top:0;width:99px;height:17px;overflow:hidden"><div class="t" style="left:46px;top:2px;">EPSR</div></div>
<div class="a" style="left:100px;top:0;width:104px;height:17px;overflow:hidden"><div class="t m" style="left:4px;top:0px;">0x0100 0000 (T)</div></div>
<div class="a" style="left:205px;top:0;width:79px;height:17px;overflow:hidden"><div class="t" style="left:4px;top:2px;">Exception program</div></div>
</div>
<div class="row" style="top:432px;">
<div class="a" style="left:29px;top:5px;width:9px;height:9px;border:1px solid #9a9a9a;background:#fff"></div>
<div class="a" style="left:31px;top:9px;width:5px;height:1px;background:#000"></div>
<div class="a" style="left:33px;top:7px;width:1px;height:5px;background:#000"></div>
<div class="a" style="left:0;top:0;width:99px;height:17px;overflow:hidden"><div class="t" style="left:46px;top:2px;">IPSR</div></div>
<div class="a" style="left:100px;top:0;width:104px;height:17px;overflow:hidden"><div class="t m" style="left:4px;top:0px;">0x0000 0000</div></div>
<div class="a" style="left:205px;top:0;width:79px;height:17px;overflow:hidden"><div class="t" style="left:4px;top:2px;">Interrupt program</div></div>
</div>
<div class="row" style="top:450px;">
<div class="a" style="left:29px;top:5px;width:9px;height:9px;border:1px solid #9a9a9a;background:#fff"></div>
<div class="a" style="left:31px;top:9px;width:5px;height:1px;background:#000"></div>
<div class="a" style="left:33px;top:7px;width:1px;height:5px;background:#000"></div>
<div class="a" style="left:0;top:0;width:99px;height:17px;overflow:hidden"><div class="t" style="left:46px;top:2px;">PriMask</div></div>
<div class="a" style="left:100px;top:0;width:104px;height:17px;overflow:hidden"><div class="t m" style="left:4px;top:0px;">0x0000 0000 (p</div></div>
<div class="a" style="left:205px;top:0;width:79px;height:17px;overflow:hidden"><div class="t" style="left:4px;top:2px;">Priority mask</div></div>
</div>
<div class="row" style="top:468px;">
<div class="a" style="left:29px;top:5px;width:9px;height:9px;border:1px solid #9a9a9a;background:#fff"></div>
<div class="a" style="left:31px;top:9px;width:5px;height:1px;background:#000"></div>
<div class="a" style="left:33px;top:7px;width:1px;height:5px;background:#000"></div>
<div class="a" style="left:0;top:0;width:99px;height:17px;overflow:hidden"><div class="t" style="left:46px;top:2px;">Control</div></div>
<div class="a" style="left:100px;top:0;width:104px;height:17px;overflow:hidden"><div class="t m" style="left:4px;top:0px;">0x0000 0000 (s</div></div>
<div class="a" style="left:205px;top:0;width:79px;height:17px;overflow:hidden"><div class="t" style="left:4px;top:2px;">Control register</div></div>
</div>
<div class="row" style="top:486px;">
<div class="a" style="left:0;top:0;width:99px;height:17px;overflow:hidden"><div class="t" style="left:46px;top:2px;">CycleCount</div></div>
<div class="a" style="left:100px;top:0;width:104px;height:17px;overflow:hidden"><div class="t m" style="left:4px;top:0px;">0x0000 0000</div></div>
<div class="a" style="left:205px;top:0;width:79px;height:17px;overflow:hidden"><div class="t" style="left:4px;top:2px;">Cycle count</div></div>
</div>
<div class="row" style="top:504px;">
<div class="a" style="left:15px;top:5px;width:9px;height:9px;border:1px solid #9a9a9a;background:#fff"></div>
<div class="a" style="left:17px;top:9px;width:5px;height:1px;background:#000"></div>
<svg style="left:31px;top:7px" width="16" height="8"><path d="M2 0H13V2.4H14Q15 2.4 15 3.4V6Q15 7 14 7H1Q0 7 0 6V3.4Q0 2.4 1 2.4H2Z" fill="#000"/><rect x="1" y="3.2" width="1.5" height="2.8" rx="0.75" fill="#fff"/><rect x="12.5" y="3.2" width="1.5" height="2.8" rx="0.75" fill="#fff"/><path d="M4 5.5H5M6 5.5H7M8 5.5H9M10 5.5H11" stroke="#fff" stroke-width="1"/></svg>
<div class="a" style="left:0;top:0;width:99px;height:17px;overflow:hidden"><div class="t" style="left:54px;top:2px;">Peripherals</div></div>
<div class="a" style="left:100px;top:0;width:104px;height:17px;overflow:hidden"><div class="t" style="left:4px;top:0px;">247 Registers</div></div>
<div class="a" style="left:205px;top:0;width:79px;height:17px;overflow:hidden"><div class="t" style="left:4px;top:2px;">Memory-Mapped</div></div>
</div>
<div class="row" style="top:522px;">
<div class="a" style="left:29px;top:5px;width:9px;height:9px;border:1px solid #9a9a9a;background:#fff"></div>
<div class="a" style="left:31px;top:9px;width:5px;height:1px;background:#000"></div>
<div class="a" style="left:33px;top:7px;width:1px;height:5px;background:#000"></div>
<svg style="left:46px;top:6px" width="14" height="9"><path d="M0 0H13V5H0Z" fill="#000"/><path d="M1 1H4V4H1ZM5 1H8V4H5ZM9 1H12V4H9Z" fill="#d6d6d6"/><path d="M2.5 1V4M6.5 1V4M10.5 1V4" stroke="#aaa" stroke-width="0.5"/><path d="M0 5H2L1 7.4ZM2.2 5H4.2L3.2 7.4ZM4.4 5H6.4L5.4 7.4ZM6.6 5H8.6L7.6 7.4ZM8.8 5H10.8L9.8 7.4ZM11 5H13L12 7.4Z" fill="#000" stroke="#000" stroke-width="0.3"/></svg>
<div class="a" style="left:0;top:0;width:99px;height:17px;overflow:hidden"><div class="t" style="left:68px;top:2px;">BPU</div></div>
<div class="a" style="left:100px;top:0;width:104px;height:17px;overflow:hidden"><div class="t" style="left:4px;top:0px;">9 Registers</div></div>
<div class="a" style="left:205px;top:0;width:79px;height:17px;overflow:hidden"><div class="t" style="left:4px;top:2px;">Breakpoint Unit</div></div>
</div>
<div class="row" style="top:540px;">
<div class="a" style="left:29px;top:5px;width:9px;height:9px;border:1px solid #9a9a9a;background:#fff"></div>
<div class="a" style="left:31px;top:9px;width:5px;height:1px;background:#000"></div>
<div class="a" style="left:33px;top:7px;width:1px;height:5px;background:#000"></div>
<svg style="left:46px;top:6px" width="14" height="9"><path d="M0 0H13V5H0Z" fill="#000"/><path d="M1 1H4V4H1ZM5 1H8V4H5ZM9 1H12V4H9Z" fill="#d6d6d6"/><path d="M2.5 1V4M6.5 1V4M10.5 1V4" stroke="#aaa" stroke-width="0.5"/><path d="M0 5H2L1 7.4ZM2.2 5H4.2L3.2 7.4ZM4.4 5H6.4L5.4 7.4ZM6.6 5H8.6L7.6 7.4ZM8.8 5H10.8L9.8 7.4ZM11 5H13L12 7.4Z" fill="#000" stroke="#000" stroke-width="0.3"/></svg>
<div class="a" style="left:0;top:0;width:99px;height:17px;overflow:hidden"><div class="t" style="left:68px;top:2px;">DCB</div></div>
<div class="a" style="left:100px;top:0;width:104px;height:17px;overflow:hidden"><div class="t" style="left:4px;top:0px;">4 Registers</div></div>
<div class="a" style="left:205px;top:0;width:79px;height:17px;overflow:hidden"><div class="t" style="left:4px;top:2px;">Debug Control</div></div>
</div>
<div class="row" style="top:558px;">
<div class="a" style="left:29px;top:5px;width:9px;height:9px;border:1px solid #9a9a9a;background:#fff"></div>
<div class="a" style="left:31px;top:9px;width:5px;height:1px;background:#000"></div>
<div class="a" style="left:33px;top:7px;width:1px;height:5px;background:#000"></div>
<svg style="left:46px;top:6px" width="14" height="9"><path d="M0 0H13V5H0Z" fill="#000"/><path d="M1 1H4V4H1ZM5 1H8V4H5ZM9 1H12V4H9Z" fill="#d6d6d6"/><path d="M2.5 1V4M6.5 1V4M10.5 1V4" stroke="#aaa" stroke-width="0.5"/><path d="M0 5H2L1 7.4ZM2.2 5H4.2L3.2 7.4ZM4.4 5H6.4L5.4 7.4ZM6.6 5H8.6L7.6 7.4ZM8.8 5H10.8L9.8 7.4ZM11 5H13L12 7.4Z" fill="#000" stroke="#000" stroke-width="0.3"/></svg>
<div class="a" style="left:0;top:0;width:99px;height:17px;overflow:hidden"><div class="t" style="left:68px;top:2px;">DWT</div></div>
<div class="a" style="left:100px;top:0;width:104px;height:17px;overflow:hidden"><div class="t" style="left:4px;top:0px;">4 Registers</div></div>
<div class="a" style="left:205px;top:0;width:79px;height:17px;overflow:hidden"><div class="t" style="left:4px;top:2px;">Data Watch</div></div>
</div>
</div>
<div class="trk" style="left:1840px;top:101px;width:16px;height:582px"></div>
<div class="btn" style="left:1840px;top:101px;width:16px;height:16px"></div>
<svg style="left:1844px;top:107px" width="8" height="8"><polygon points="0,4 7,4 3.5,0" fill="#000"/></svg>
<div class="btn" style="left:1840px;top:667px;width:16px;height:16px"></div>
<svg style="left:1844px;top:673px" width="8" height="8"><polygon points="0,0 7,0 3.5,4" fill="#000"/></svg>
<div class="btn" style="left:1840px;top:117px;width:16px;height:459px"></div>
<div class="trk" style="left:1556px;top:683px;width:284px;height:16px"></div>
<div class="btn" style="left:1556px;top:683px;width:16px;height:16px"></div>
<svg style="left:1562px;top:687px" width="8" height="8"><polygon points="4,0 4,7 0,3.5" fill="#000"/></svg>
<div class="btn" style="left:1824px;top:683px;width:16px;height:16px"></div>
<svg style="left:1830px;top:687px" width="8" height="8"><polygon points="0,0 0,7 4,3.5" fill="#000"/></svg>
<div class="btn" style="left:1572px;top:683px;width:230px;height:16px"></div>
<div class="a sh" style="left:2px;top:703px;width:1854px;height:1px;"></div>
<div class="a bk" style="left:2px;top:704px;width:1854px;height:1px;"></div>
<div class="a w" style="left:2px;top:705px;width:925px;height:1px;"></div>
<div class="a w" style="left:927px;top:705px;width:1px;height:320px;"></div>
<div class="a " style="left:2px;top:705px;width:1px;height:320px;background:#eceae6"></div>
<div class="a w" style="left:933px;top:705px;width:923px;height:1px;"></div>
<div class="a " style="left:933px;top:705px;width:1px;height:320px;background:#eceae6"></div>
<div class="t " style="left:5px;top:707px;">Console</div>
<svg style="left:915px;top:710px" width="8" height="7"><path d="M0.4 0.4L7.6 6.6M7.6 0.4L0.4 6.6" stroke="#000" stroke-width="1.45" fill="none"/></svg>
<div class="a sh" style="left:2px;top:723px;width:925px;height:1px;"></div>
<div class="a w" style="left:3px;top:724px;width:908px;height:280px;"></div>
<div class="t m cb" style="left:4px;top:724px;">Reset type: NORMAL (https://wiki.segger.com/J-Link_Reset_Strategies)</div>
<div class="t m cb" style="left:4px;top:739px;">Reset: Halt core after reset via DEMCR.VC_CORERESET.</div>
<div class="t m cb" style="left:4px;top:754px;">Reset: Reset device via AIRCR.SYSRESETREQ.</div>
<div class="t m" style="left:4px;top:769px;">Elf.GetBaseAddr(); // returns 0x8000000</div>
<div class="t m" style="left:4px;top:784px;">Target.ReadU32 (0x08000000); // returns 0x4, data is 0x20024000</div>
<div class="t m" style="left:4px;top:799px;">Target.SetReg (&quot;SP&quot;, 0x20024000);</div>
<div class="t m" style="left:4px;top:814px;">Elf.GetEntryPointPC(); // returns 0x8000268</div>
<div class="t m" style="left:4px;top:829px;">Target.SetReg (&quot;PC&quot;, 0x8000268);</div>
<div class="t m cb" style="left:4px;top:844px;">J-Link: Flash download: Bank 0 @ 0x08000000: Skipped. Contents already match</div>
<div class="t m" style="left:4px;top:859px;">Elf.GetBaseAddr(); // returns 0x8000000</div>
<div class="t m" style="left:4px;top:874px;">Target.ReadU32 (0x08000000); // returns 0x4, data is 0x20024000</div>
<div class="t m" style="left:4px;top:889px;">Target.SetReg (&quot;SP&quot;, 0x20024000);</div>
<div class="t m" style="left:4px;top:904px;">Elf.GetEntryPointPC(); // returns 0x8000268</div>
<div class="t m" style="left:4px;top:919px;">Target.SetReg (&quot;PC&quot;, 0x8000268);</div>
<div class="t m cb" style="left:4px;top:934px;">Memory map &#x27;after startup completion point&#x27; is active</div>
<div class="t m" style="left:4px;top:949px;">Startup complete (PC=0x080001E4)</div>
<div class="t m" style="left:4px;top:964px;">Break.SetOnSrc (&quot;/app/app/main.c:39&quot;);</div>
<div class="t m" style="left:4px;top:979px;">Debug.Continue();</div>
<div class="trk" style="left:911px;top:724px;width:16px;height:280px"></div>
<div class="btn" style="left:911px;top:724px;width:16px;height:16px"></div>
<svg style="left:915px;top:730px" width="8" height="8"><polygon points="0,4 7,4 3.5,0" fill="#000"/></svg>
<div class="btn" style="left:911px;top:988px;width:16px;height:16px"></div>
<svg style="left:915px;top:994px" width="8" height="8"><polygon points="0,0 7,0 3.5,4" fill="#000"/></svg>
<div class="btn" style="left:911px;top:926px;width:16px;height:62px"></div>
<div class="a bk" style="left:3px;top:1004px;width:924px;height:1px;"></div>
<div class="a bk" style="left:3px;top:1005px;width:1px;height:17px;"></div>
<div class="a w" style="left:4px;top:1005px;width:923px;height:17px;"></div>
<div class="a " style="left:926px;top:1005px;width:1px;height:17px;background:#e8e6e2"></div>
<div class="a " style="left:4px;top:1021px;width:923px;height:1px;background:#e8e6e2"></div>
<svg style="left:9px;top:1010px" width="5" height="8"><polygon points="0,0 0,7 4,3.5" fill="#3a4a9a"/></svg>
<div class="a sh" style="left:931px;top:705px;width:1px;height:319px;"></div>
<div class="a bk" style="left:932px;top:705px;width:1px;height:319px;"></div>
<div class="t " style="left:936px;top:707px;">Memory 1 @ 00000000</div>
<svg style="left:1844px;top:710px" width="8" height="7"><path d="M0.4 0.4L7.6 6.6M7.6 0.4L0.4 6.6" stroke="#000" stroke-width="1.45" fill="none"/></svg>
<div class="a sh" style="left:933px;top:723px;width:923px;height:1px;"></div>
<div class="a w" style="left:933px;top:724px;width:907px;height:300px;"></div>
<div class="a" style="left:933px;top:724px;width:908px;height:300px;overflow:hidden">
<div class="a" style="left:73px;top:1px;width:7px;height:15px;background:#000080"></div>
<div class="a" style="left:423px;top:1px;width:7px;height:15px;background:#000080"></div>
<div class="t m" style="left:3px;top:1px">00000000  <span style="color:#fff">0</span>0 40 02 20 69 02 00 08  49 02 00 08 4D 02 00 08  <span style="color:#fff">.</span>@. i...I...M...</div>
<div class="t m" style="left:3px;top:16px">00000010  00 00 00 00 00 00 00 00  00 00 00 00 00 00 00 00  ................</div>
<div class="t m" style="left:3px;top:31px">00000020  00 00 00 00 00 00 00 00  00 00 00 00 51 02 00 08  ............Q...</div>
<div class="t m" style="left:3px;top:46px">00000030  00 00 00 00 00 00 00 00  55 02 00 08 59 02 00 08  ........U...Y...</div>
<div class="t m" style="left:3px;top:61px">00000040  B9 02 00 08 B9 02 00 08  B9 02 00 08 B9 02 00 08  ¹...¹...¹...¹...</div>
<div class="t m" style="left:3px;top:76px">00000050  B9 02 00 08 B9 02 00 08  B9 02 00 08 B9 02 00 08  ¹...¹...¹...¹...</div>
<div class="t m" style="left:3px;top:91px">00000060  B9 02 00 08 B9 02 00 08  B9 02 00 08 B9 02 00 08  ¹...¹...¹...¹...</div>
<div class="t m" style="left:3px;top:106px">00000070  B9 02 00 08 B9 02 00 08  B9 02 00 08 B9 02 00 08  ¹...¹...¹...¹...</div>
<div class="t m" style="left:3px;top:121px">00000080  B9 02 00 08 B9 02 00 08  B9 02 00 08 B9 02 00 08  ¹...¹...¹...¹...</div>
<div class="t m" style="left:3px;top:136px">00000090  B9 02 00 08 B9 02 00 08  B9 02 00 08 B9 02 00 08  ¹...¹...¹...¹...</div>
<div class="t m" style="left:3px;top:151px">000000A0  B9 02 00 08 B9 02 00 08  B9 02 00 08 B9 02 00 08  ¹...¹...¹...¹...</div>
<div class="t m" style="left:3px;top:166px">000000B0  B9 02 00 08 B9 02 00 08  B9 02 00 08 00 29 34 D0  ¹...¹...¹....)4Ð</div>
<div class="t m" style="left:3px;top:181px">000000C0  01 23 00 22 10 B4 88 42  2C D3 01 24 24 07 A1 42  .#.&quot;.´.B,Ó.$$.¡B</div>
<div class="t m" style="left:3px;top:196px">000000D0  04 D2 81 42 02 D2 09 01  1B 01 F8 E7 E4 00 A1 42  .Ò.B.Ò....øçä.¡B</div>
<div class="t m" style="left:3px;top:211px">000000E0  04 D2 81 42 02 D2 49 00  5B 00 F8 E7 88 42 01 D3  .Ò.B.ÒI.[.øç.B.Ó</div>
<div class="t m" style="left:3px;top:226px">000000F0  40 1A 1A 43 4C 08 A0 42  02 D3 00 1B 5C 08 22 43  @..CL..B.Ó..\.&quot;C</div>
<div class="t m" style="left:3px;top:241px">00000100  8C 08 A0 42 02 D3 00 1B  9C 08 22 43 CC 08 A0 42  ...B.Ó....&quot;CÌ..B</div>
<div class="t m" style="left:3px;top:256px">00000110  02 D3 00 1B DC 08 22 43  00 28 03 D0 1B 09 01 D0  .Ó..Ü.&quot;C.(.Ð...Ð</div>
<div class="t m" style="left:3px;top:271px">00000120  09 09 E3 E7 10 00 10 BC  70 47 01 B5 00 20 00 F0  ..ãç...¼pG.µ. .ð</div>
<div class="t m" style="left:3px;top:286px">00000130  0B F8 02 BD 00 29 F8 D0  03 B5 FF F7 C1 FF 0E BC  .ø.½.)øÐ.µÿ÷Áÿ.¼</div>
</div>
<div class="trk" style="left:1840px;top:724px;width:16px;height:300px"></div>
<div class="btn" style="left:1840px;top:724px;width:16px;height:16px"></div>
<svg style="left:1844px;top:730px" width="8" height="8"><polygon points="0,4 7,4 3.5,0" fill="#000"/></svg>
<div class="btn" style="left:1840px;top:1008px;width:16px;height:16px"></div>
<svg style="left:1844px;top:1014px" width="8" height="8"><polygon points="0,0 7,0 3.5,4" fill="#000"/></svg>
<div class="btn" style="left:1840px;top:740px;width:16px;height:24px"></div>
<div class="a w" style="left:2px;top:1023px;width:1854px;height:1px;"></div>
<div class="a" style="left:4px;top:1027px;width:1619px;height:18px;box-shadow:inset 1px 1px 0 #6a6864,inset -1px -1px 0 #fff"></div>
<div class="a" style="left:1626px;top:1027px;width:87px;height:18px;box-shadow:inset 1px 1px 0 #6a6864,inset -1px -1px 0 #fff"></div>
<div class="a" style="left:1715px;top:1027px;width:141px;height:18px;box-shadow:inset 1px 1px 0 #6a6864,inset -1px -1px 0 #fff"></div>
<div class="t " style="left:9px;top:1028px;">CPU halted.</div>
<div class="t " style="left:1635px;top:1028px;">Ln 24  Ch 1</div>
<div class="t " style="left:1724px;top:1028px;">Connected @ 4 MHz</div>
</body></html>
